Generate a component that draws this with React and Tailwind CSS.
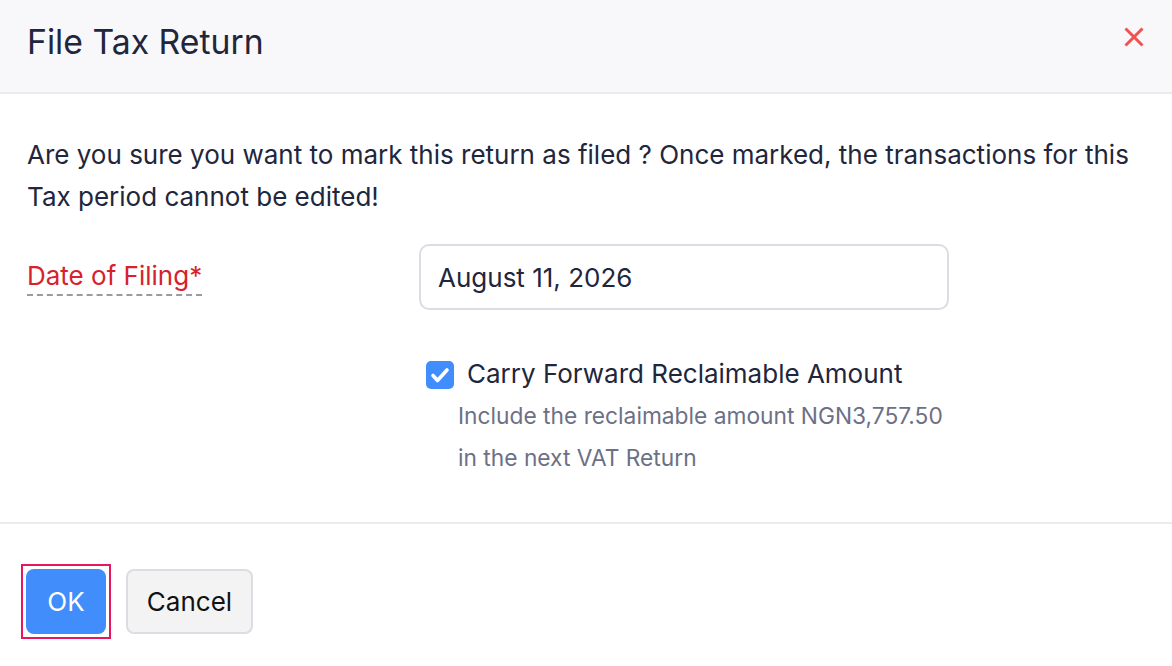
import React from "react";

export default function App() {
  return (
    <div className="w-[1172px] h-[666px] bg-white flex flex-col overflow-hidden" style={{ fontFamily: "Inter, 'Noto Sans', sans-serif" }}>
      <div className="h-[94px] shrink-0 bg-[#f8f8fb] border-b-2 border-[#ebebeb] flex items-center justify-between pl-[27px] pr-[28px] pb-[8px]">
        <h1 className="text-[33.75px] text-[#21263c] leading-none">File Tax Return</h1>
        <svg width="20" height="20" viewBox="0 0 20 20" className="mb-[10px]">
          <path d="M1.5 1.5 L18.5 18.5 M18.5 1.5 L1.5 18.5" stroke="#f0524f" strokeWidth="3" strokeLinecap="butt" />
        </svg>
      </div>
      <div className="flex-1 flex flex-col pl-[27px] pr-[27px] pt-[40px]">
        <p className="text-[26px] leading-[42px] text-[#21263c]">
          Are you sure you want to mark this return as filed ? Once marked, the transactions for this Tax period cannot be edited!
        </p>
        <div className="flex mt-[26px]">
          <div className="w-[392px] shrink-0 pt-[15px]">
            <span className="text-[26px] leading-[34px] text-[#d6222b] border-b-2 border-dashed border-[#9a9aa2] inline-block pb-[1px]">Date of Filing*</span>
          </div>
          <div className="flex flex-col">
            <div className="w-[530px] h-[66px] border-2 border-[#dcdce4] rounded-[10px] flex items-center pl-[17px] text-[26px] text-[#21263c]">
              August 11, 2026
            </div>
            <div className="flex mt-[49px] ml-[7px]">
              <svg width="28" height="28" viewBox="0 0 28 28" className="mt-[2px] shrink-0">
                <rect x="0" y="0" width="28" height="28" rx="5" fill="#408dfb" />
                <path d="M7 14.5 L11.5 19.5 L21 9" fill="none" stroke="white" strokeWidth="3.6" strokeLinecap="round" strokeLinejoin="round" />
              </svg>
              <div className="flex flex-col ml-[13px]">
                <span className="text-[26px] leading-[30px] text-[#21263c] whitespace-nowrap">Carry Forward Reclaimable Amount</span>
                <span className="text-[22.75px] leading-[42px] text-[#6c7086] mt-[6px] -ml-[9px] w-[520px]">
                  Include the reclaimable amount NGN3,757.50<br />in the next VAT Return
                </span>
              </div>
            </div>
          </div>
        </div>
      </div>
      <div className="h-[144px] shrink-0 border-t-2 border-[#ebebeb] flex items-start pl-[21px] pt-[40px] gap-[15px]">
        <div className="border-2 border-[#e8175d] p-[3px]">
          <button className="w-[80px] h-[65px] rounded-[8px] bg-[#408dfb] text-white text-[26px] block">OK</button>
        </div>
        <button className="w-[127px] h-[65px] mt-[5px] rounded-[8px] bg-[#f3f3f4] border-2 border-[#dcdce2] text-[#111111] text-[26px]">Cancel</button>
      </div>
    </div>
  );
}
